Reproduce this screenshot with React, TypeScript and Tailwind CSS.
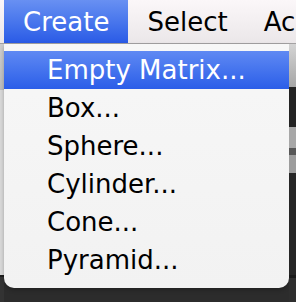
const items = ["Box...", "Sphere...", "Cylinder...", "Cone...", "Pyramid..."];

const App = () => {
  return (
    <div className="flex h-[302px] w-[296px] flex-col overflow-hidden bg-[#2c2c2c] font-['DejaVu_Sans',sans-serif] text-[26px] text-black antialiased">
      {/* menu bar */}
      <div className="flex h-[44px] shrink-0 border-b border-[#a4a2a3] bg-gradient-to-b from-[#fbf7f9] to-[#ebe7e9] pl-[4px]">
        <div className="flex items-center bg-gradient-to-b from-[#6890f2] to-[#2a5ae6] px-[19px] leading-none text-white">
          Create
        </div>
        <div className="flex items-center px-[19px] leading-none">Select</div>
        <div className="flex items-center pl-[17px] leading-none whitespace-nowrap">Ac</div>
      </div>

      <div className="flex flex-1">
        {/* app content peeking out on the left */}
        <div className="flex w-[4px] flex-col">
          <div className="h-[46px] bg-gradient-to-b from-[#cfcfcf] to-[#bdbdbd]" />
          <div className="h-[185px] bg-[#d9d9d9]" />
          <div className="h-[2px] bg-[#1c1c1c]" />
          <div className="flex-1 bg-[#333333]" />
        </div>

        {/* dropdown */}
        <div className="flex w-[285px] flex-col">
          <div className="flex h-[244px] flex-col rounded-b-[10px] bg-gradient-to-b from-[#f7f7f7] to-[#f2f2f2] pt-[7px] shadow-[0_2px_4px_rgba(0,0,0,0.25)]">
            <div className="flex h-[38px] items-center bg-gradient-to-b from-[#5f89f3] to-[#2b5de8] pl-[43px] text-white">
              Empty Matrix...
            </div>
            {items.map((label) => (
              <div key={label} className="flex h-[38px] items-center pl-[43px]">
                {label}
              </div>
            ))}
          </div>
          <div className="flex-1" />
        </div>

        {/* app content peeking out on the right */}
        <div className="flex w-[7px] flex-col">
          <div className="h-[43px] bg-gradient-to-b from-[#d4d4d4] to-[#a6a6a6]" />
          <div className="h-[40px] bg-[#232323]" />
          <div className="h-[21px] bg-[#a7a7a7]" />
          <div className="h-[7px] bg-[#575757]" />
          <div className="h-[18px] bg-[#9c9c9c]" />
          <div className="h-[102px] bg-[#262626]" />
          <div className="h-[3px] bg-[#1a1a1a]" />
          <div className="flex-1 bg-[#2e2e2e]" />
        </div>
      </div>
    </div>
  );
};

export default App;
